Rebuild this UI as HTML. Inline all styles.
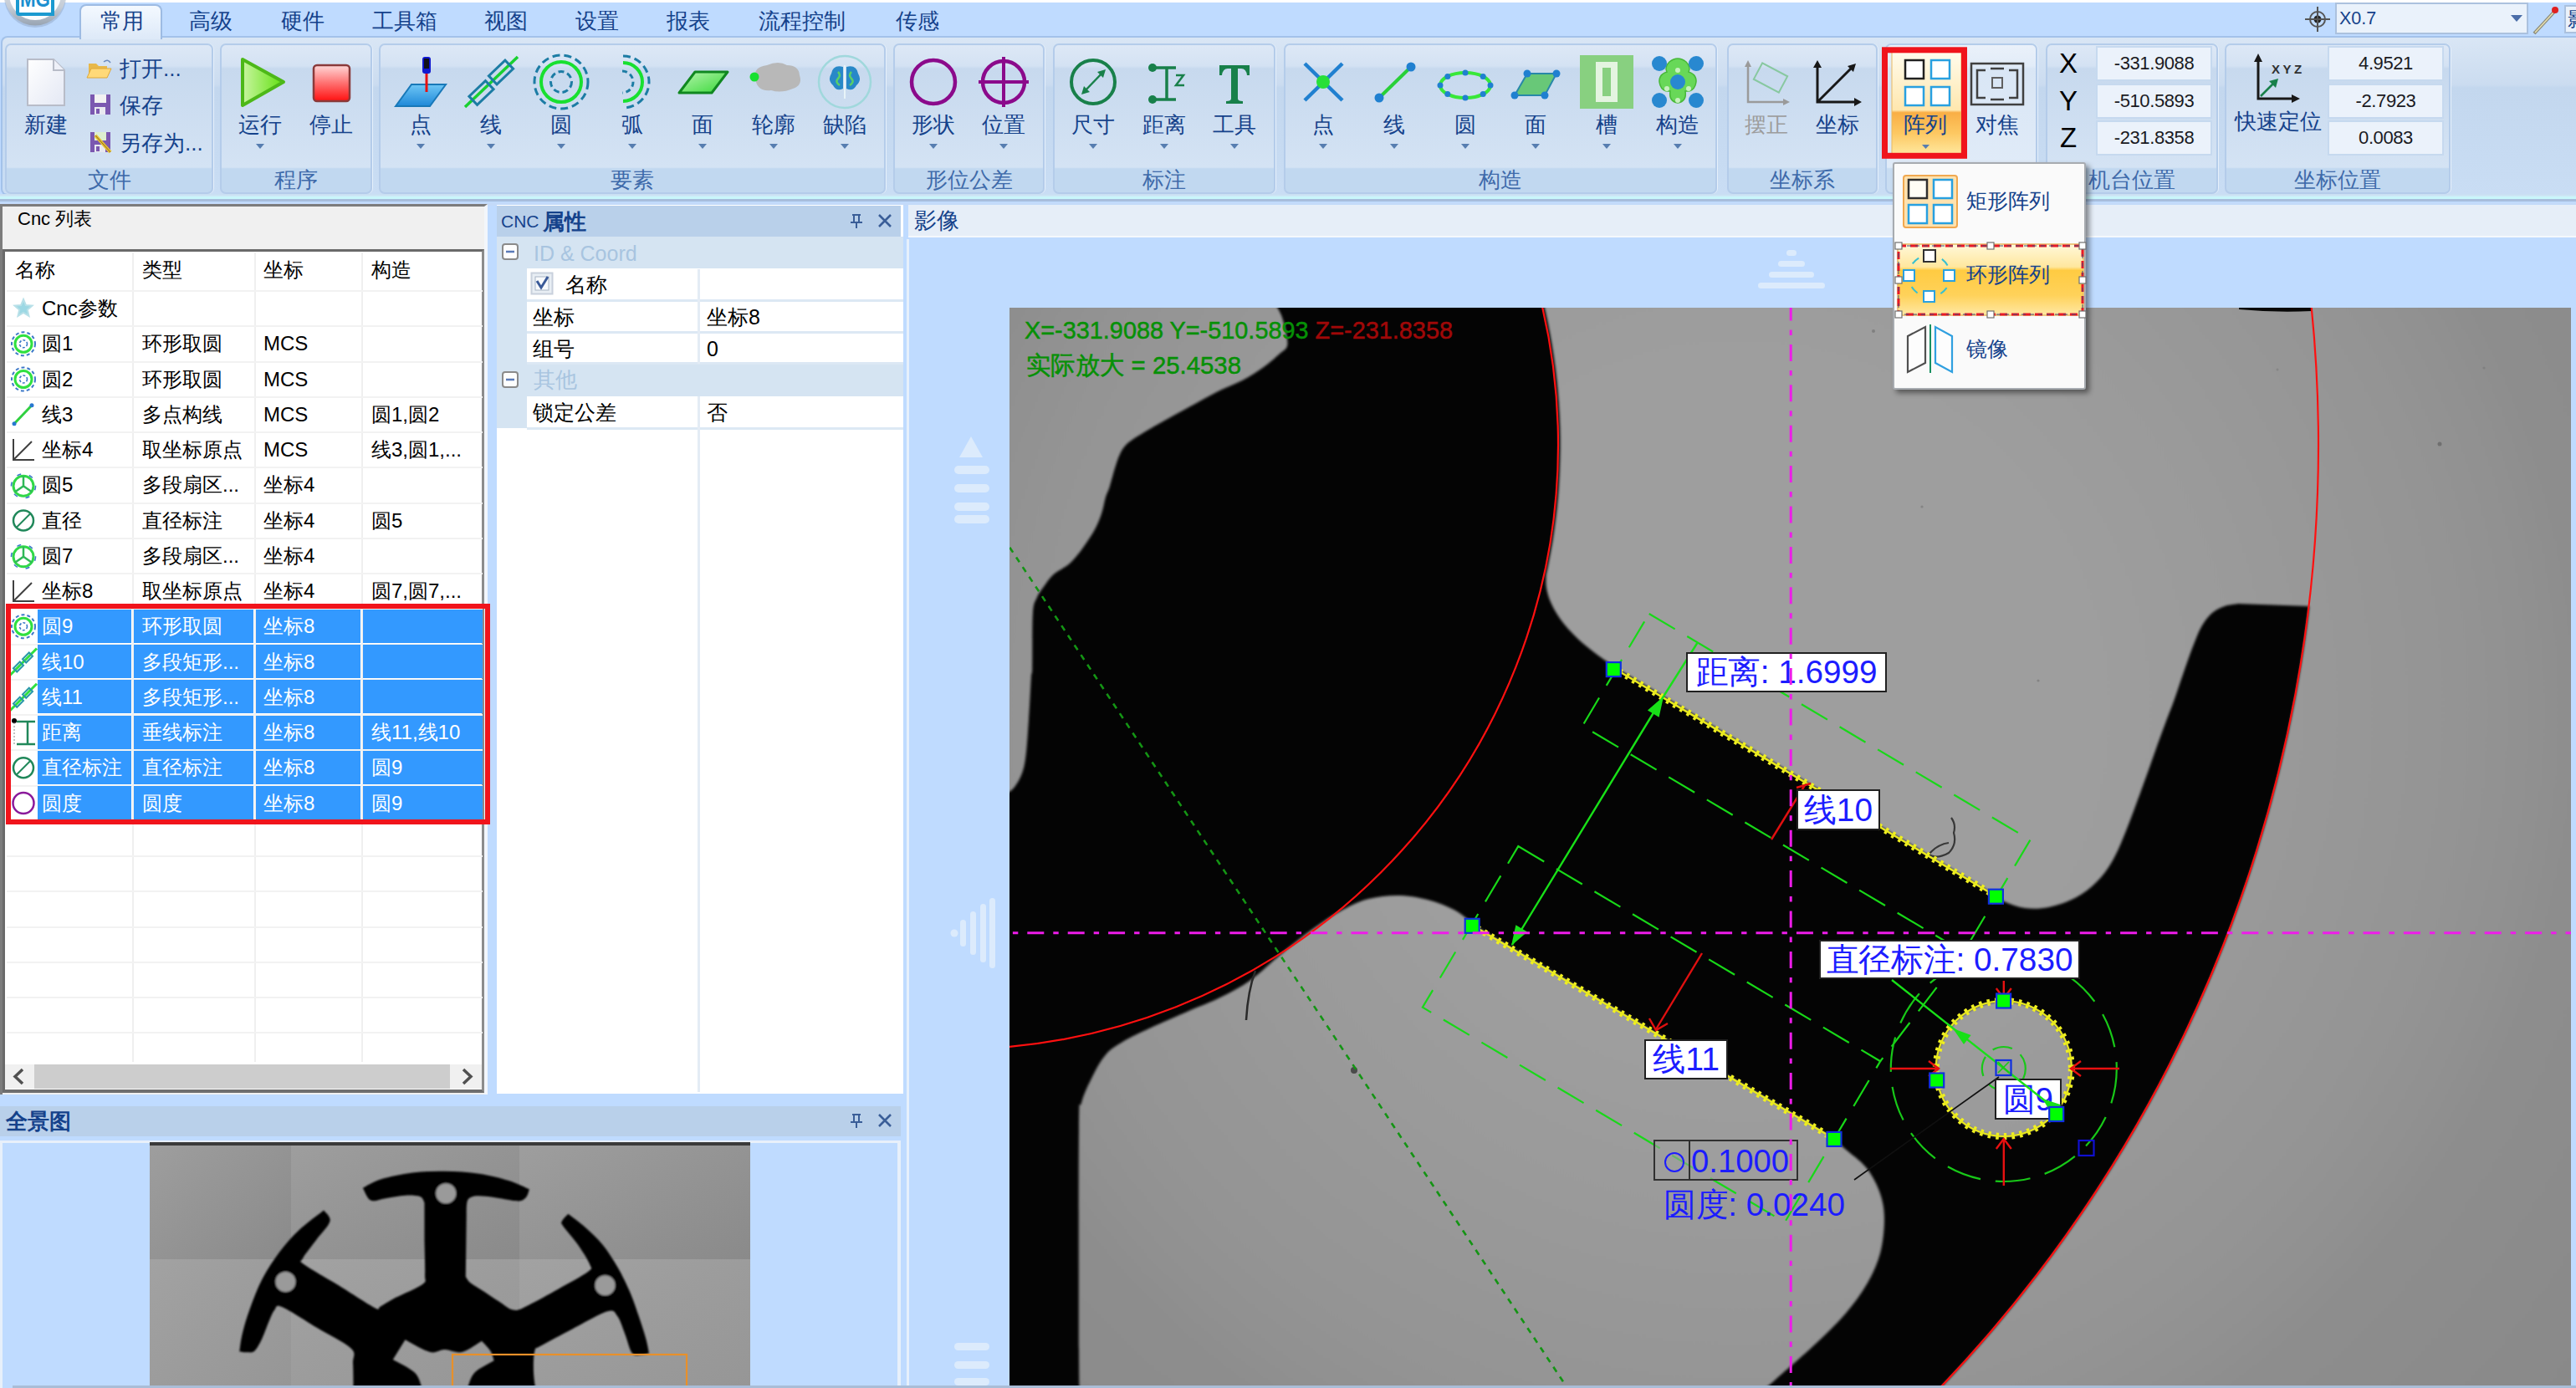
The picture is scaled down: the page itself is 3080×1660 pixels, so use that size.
<!DOCTYPE html>
<html><head><meta charset="utf-8"><title>CNC</title>
<style>
html,body{margin:0;padding:0;overflow:hidden;}
html{width:3080px;height:1660px;}
body{width:3080px;height:1660px;overflow:hidden;position:relative;background:#BFDBFF;font-family:"Liberation Sans",sans-serif;color:#15428B;}
.a{position:absolute;box-sizing:border-box;}
.t{position:absolute;white-space:nowrap;overflow:visible;}
svg{position:absolute;overflow:visible;}
i{display:inline-block;width:1em;text-align:center;font-style:normal;}

.tab{position:absolute;top:8px;height:34px;line-height:34px;font-size:26px;color:#15428B;white-space:nowrap;}
#tabact{left:95px;top:5px;width:99px;height:42px;border:2px solid #9DBBE3;border-bottom:none;border-radius:8px 8px 0 0;background:linear-gradient(#F4F9FF,#DDE9F8);}
#rbody{left:1px;top:43px;width:3079px;height:191px;border:2px solid #A3C2EA;border-right:none;border-radius:8px 0 0 8px;background:linear-gradient(#D9E6F5 0%,#CBDCF0 30%,#C3D7EE 32%,#C9DDF4 100%);}
#orb{left:6px;top:-46px;width:74px;height:76px;border-radius:50%;background:radial-gradient(circle at 50% 35%,#FFFFFF 0%,#E9EEF4 55%,#B9C3CF 90%,#9AA5B2 100%);box-shadow:0 2px 4px rgba(60,80,110,.55);}
#orblogo{left:19px;top:-20px;width:49px;height:38px;background:#FFFFFF;border:4px solid #1C9AD0;border-radius:3px;color:#1C8FD0;font-weight:bold;font-size:30px;line-height:16px;text-align:center;overflow:hidden;}
#combo{left:2792px;top:3px;width:231px;height:38px;background:#EAF2FB;border:2px solid #ABC1DE;font-size:21.5px;line-height:35px;padding-left:3px;color:#15428B;}

.grp{position:absolute;top:52px;height:179.5px;box-sizing:border-box;border:2px solid #B4CCEA;border-radius:7px;background:linear-gradient(#DDE8F6 0%,#D4E2F3 14%,#C7D9EE 16%,#D4E3F4 83%,#C1D8F0 84%,#C1D8F0 100%);box-shadow:1px 0 0 #E6F0FB;}
.gcap{position:absolute;top:201px;height:28px;line-height:28px;font-size:26px;color:#3E6AAA;text-align:center;white-space:nowrap;}
.bl{position:absolute;top:133px;height:32px;line-height:32px;font-size:26px;color:#15428B;text-align:center;white-space:nowrap;width:120px;}
.sl{position:absolute;height:32px;line-height:32px;font-size:26px;color:#15428B;white-space:nowrap;}
.vb{position:absolute;box-sizing:border-box;width:139px;height:42px;line-height:38px;border:2px solid #C6D9EF;background:#EBF2FB;color:#1A1A22;font-size:22px;letter-spacing:-0.4px;text-align:center;}
.xyz{position:absolute;left:2460px;width:26px;font-size:33px;line-height:42px;color:#000;text-align:center;}
#dd{left:2263px;top:194px;width:231px;height:272px;background:#FAFAFA;border:2px solid #A7ABB0;border-radius:3px;box-shadow:4px 4px 6px rgba(0,0,0,.45);}
.ddt{position:absolute;left:2351px;height:34px;line-height:34px;font-size:25px;color:#15428B;white-space:nowrap;}

#cnc{left:0;top:244px;width:583px;height:1065px;background:#F0F0F0;border-right:4px solid #F2F6FB;border-top:3px solid #7C7C7C;border-left:3px solid #7C7C7C;}
#cnclist{left:3px;top:298px;width:576px;height:1009px;background:#FFFFFF;border:3px solid #6A6A6A;border-right-color:#8C8C8C;border-bottom:4px solid #6E6E6E;}
.lt{position:absolute;height:42px;line-height:42px;font-size:24px;color:#000;white-space:nowrap;}
.lts{color:#FFFFFF;}
.hl{position:absolute;left:8px;width:569px;height:2px;background:#F2F2F2;}
.vl{position:absolute;top:302px;width:2px;height:968px;background:#EFEFEF;}
.selr{position:absolute;height:40px;background:#3399FF;}
#redbox{left:7px;top:722px;width:579px;height:263.5px;border:6px solid #F0141C;}
#prop{left:594px;top:245px;width:486px;height:1063px;background:#FFFFFF;}
.ptitle{position:absolute;background:#B9D0EA;color:#15428B;font-size:26px;line-height:38px;height:38px;white-space:nowrap;}
.pcat{position:absolute;left:594px;width:486px;background:#D5E4F2;color:#A8C4E0;font-size:26px;white-space:nowrap;}
.prow{position:absolute;font-size:25px;color:#000;white-space:nowrap;}
#pano{left:0;top:1364px;width:1077px;height:296px;background:#BFDBFF;border-left:3px solid #E8F0FA;border-right:4px solid #E8F0FA;border-top:3px solid #E8F0FA;}
#vhead{left:1086px;top:245px;width:1994px;height:39px;background:#E6EEF8;border-bottom:2px solid #F4F8FC;}

</style></head><body>
<div class="a" style="left:0;top:0;width:3080px;height:2.5px;background:#FFFFFF"></div><div class="a" id="rbody"></div>
<div class="a" id="tabact"></div>
<div class="tab" style="left:120px"><i>常</i><i>用</i></div>
<div class="tab" style="left:226px"><i>高</i><i>级</i></div>
<div class="tab" style="left:336px"><i>硬</i><i>件</i></div>
<div class="tab" style="left:445px"><i>工</i><i>具</i><i>箱</i></div>
<div class="tab" style="left:579px"><i>视</i><i>图</i></div>
<div class="tab" style="left:688px"><i>设</i><i>置</i></div>
<div class="tab" style="left:797px"><i>报</i><i>表</i></div>
<div class="tab" style="left:907px"><i>流</i><i>程</i><i>控</i><i>制</i></div>
<div class="tab" style="left:1071px"><i>传</i><i>感</i></div>
<svg style="left:0;top:0" width="90" height="40" viewBox="0 0 90 40" font-family="Liberation Sans, sans-serif"><defs><linearGradient id="gorb" x1="0" y1="0" x2="0" y2="1"><stop offset="0" stop-color="#E8ECF0"/><stop offset=".7" stop-color="#C4CCD6"/><stop offset="1" stop-color="#98A4B2"/></linearGradient></defs>
<circle cx="42" cy="-4" r="37" fill="#7F93B0" opacity=".35"/><circle cx="42" cy="-6" r="36.5" fill="url(#gorb)"/><circle cx="42" cy="-7" r="31" fill="#FBFCFD"/>
<rect x="21" y="-26" width="42" height="43" rx="2" fill="#FFFFFF" stroke="#1C9AD0" stroke-width="4"/><path d="M57 19l8-8v8z" fill="#1C9AD0"/>
<text x="42" y="7.5" font-size="27" font-weight="bold" fill="#1C8FD0" text-anchor="middle" textLength="36" lengthAdjust="spacingAndGlyphs">MG</text></svg>
<svg style="left:2756px;top:8px" width="30" height="30" viewBox="0 0 30 30"><circle cx="15" cy="15" r="9" fill="none" stroke="#555" stroke-width="2"/><circle cx="15" cy="15" r="4.5" fill="#222"/><path d="M15 0V30M0 15H30" stroke="#555" stroke-width="2"/></svg>
<div class="a" id="combo">X0.7</div>
<svg style="left:3002px;top:18px" width="14" height="8" viewBox="0 0 14 8"><path d="M0 0H14L7 8Z" fill="#4A6DA8"/></svg>
<svg style="left:3028px;top:6px" width="32" height="36" viewBox="0 0 32 36"><path d="M2 34L26 8" stroke="#8A8A7A" stroke-width="4"/><path d="M3 33L25 9" stroke="#E8E0B0" stroke-width="1.5"/><circle cx="27" cy="6" r="4" fill="#E02020"/></svg>
<div class="a" style="left:3066px;top:6px;width:14px;height:34px;background:#EAF2FB;border:2px solid #ABC1DE;border-right:none"></div>
<div class="t" style="left:3070px;top:8px;width:10px;overflow:hidden;font-size:24px;line-height:30px;color:#15428B"><i>影</i></div>
<div class="a" style="left:0;top:232px;width:3080px;height:3px;background:linear-gradient(#C9DDF2,#CFEAF6)"></div><div class="a" style="left:0;top:234.5px;width:3080px;height:3.7px;background:#C9F6FB"></div><div class="a" style="left:0;top:238.2px;width:3080px;height:3.3px;background:#A7BDDC"></div><div class="a" style="left:0;top:241.5px;width:3080px;height:4px;background:#C3DAF9"></div>
<div class="grp" style="left:6px;width:249px"></div><div class="gcap" style="left:6px;width:249px"><i>文</i><i>件</i></div>
<div class="grp" style="left:263px;width:182px"></div><div class="gcap" style="left:263px;width:182px"><i>程</i><i>序</i></div>
<div class="grp" style="left:453px;width:606px"></div><div class="gcap" style="left:453px;width:606px"><i>要</i><i>素</i></div>
<div class="grp" style="left:1068px;width:181px"></div><div class="gcap" style="left:1068px;width:181px"><i>形</i><i>位</i><i>公</i><i>差</i></div>
<div class="grp" style="left:1259px;width:266px"></div><div class="gcap" style="left:1259px;width:266px"><i>标</i><i>注</i></div>
<div class="grp" style="left:1535px;width:518px"></div><div class="gcap" style="left:1535px;width:518px"><i>构</i><i>造</i></div>
<div class="grp" style="left:2065px;width:180px"></div><div class="gcap" style="left:2065px;width:180px"><i>坐</i><i>标</i><i>系</i></div>
<div class="grp" style="left:2254px;width:182px;background:linear-gradient(#EAF1FA 0%,#E2ECF8 14%,#D9E6F5 16%,#E0EBF8 83%,#C9DDF2 84%,#C9DDF2 100%)"></div><div class="grp" style="left:2446px;width:206px"></div><div class="gcap" style="left:2446px;width:206px"><i>机</i><i>台</i><i>位</i><i>置</i></div>
<div class="grp" style="left:2660px;width:270px"></div><div class="gcap" style="left:2660px;width:270px"><i>坐</i><i>标</i><i>位</i><i>置</i></div>
<svg style="left:0;top:0" width="3080" height="240" viewBox="0 0 3080 240"><defs>
<linearGradient id="gpage" x1="0" y1="0" x2="1" y2="1"><stop offset="0" stop-color="#FFFFFF"/><stop offset="1" stop-color="#E4E8F4"/></linearGradient>
<linearGradient id="gplay" x1="0" y1="0" x2="1" y2="0"><stop offset="0" stop-color="#C8F5A0"/><stop offset="1" stop-color="#62E010"/></linearGradient>
<linearGradient id="gstop" x1="0" y1="0" x2="0" y2="1"><stop offset="0" stop-color="#FFD8D8"/><stop offset=".5" stop-color="#FF7070"/><stop offset="1" stop-color="#FF1010"/></linearGradient>
<linearGradient id="gblue" x1="0" y1="0" x2="0" y2="1"><stop offset="0" stop-color="#6EC6F5"/><stop offset="1" stop-color="#1E88D8"/></linearGradient>
<linearGradient id="ggreen" x1="0" y1="0" x2="1" y2="1"><stop offset="0" stop-color="#B8F5B0"/><stop offset="1" stop-color="#38D838"/></linearGradient>
<linearGradient id="gsel" x1="0" y1="0" x2="0" y2="1"><stop offset="0" stop-color="#FFFCEE"/><stop offset=".56" stop-color="#FFE7AE"/><stop offset=".585" stop-color="#F9AE45"/><stop offset=".78" stop-color="#FDC862"/><stop offset="1" stop-color="#FFEBA4"/></linearGradient>
<linearGradient id="gsel2" x1="0" y1="0" x2="0" y2="1"><stop offset="0" stop-color="#FFF8DA"/><stop offset=".32" stop-color="#FFE79E"/><stop offset=".37" stop-color="#FFCB42"/><stop offset=".72" stop-color="#FFD25A"/><stop offset="1" stop-color="#FFE8A4"/></linearGradient>
</defs><path d="M33 71h31l13 13v42h-44z" fill="url(#gpage)" stroke="#B8BCC8" stroke-width="2"/><path d="M64 71v13h13" fill="#EEF0F8" stroke="#B8BCC8" stroke-width="2"/><path d="M106 76h9l3 3h10v14h-22z" fill="#E8B84A"/><path d="M104 93l5-11h24l-5 11z" fill="#FFD978" stroke="#E0A838" stroke-width="1"/><path d="M124 74q5-4 8 1" fill="none" stroke="#6A8ABF" stroke-width="1.5"/><path d="M108 113h24v24h-24z" fill="#7B58B0"/><rect x="113" y="113" width="14" height="10" fill="#F2F2F2"/><rect x="113" y="128" width="13" height="9" fill="#E8E8F0"/><rect x="115" y="130" width="4" height="6" fill="#7B58B0"/><path d="M108 158h24v24h-24z" fill="#7B58B0"/><rect x="113" y="158" width="14" height="10" fill="#DDEFD0"/><rect x="113" y="173" width="13" height="9" fill="#E8E8F0"/><rect x="115" y="175" width="4" height="6" fill="#7B58B0"/><path d="M114 162l18 20" stroke="#E8C030" stroke-width="4"/><path d="M114 162l18 20" stroke="#8A6A20" stroke-width="1"/><path d="M290 71L339 98L290 126Z" fill="url(#gplay)" stroke="#4DB818" stroke-width="4" stroke-linejoin="round"/><path d="M306 172h10l-5 6z" fill="#567DB0"/><rect x="375" y="78" width="43" height="43" rx="4" fill="url(#gstop)" stroke="#8A3A3A" stroke-width="2.5"/><path d="M473 127L492 101H533L514 127Z" fill="url(#gblue)" stroke="#1878B8" stroke-width="2"/><path d="M510 88V110" stroke="#E81010" stroke-width="3"/><rect x="505" y="68" width="10" height="20" rx="3" fill="#1018D0"/><rect x="507" y="70" width="6" height="12" fill="#101018"/><path d="M556 128L619 68" stroke="#18D030" stroke-width="3.5"/><rect x="562" y="104" width="27" height="14" fill="none" stroke="#1C7CA4" stroke-width="3" transform="rotate(-43.6 575.5 111)"/><rect x="585.5" y="79.5" width="27" height="14" fill="none" stroke="#1C7CA4" stroke-width="3" transform="rotate(-43.6 599 86.5)"/><circle cx="671" cy="98" r="32" fill="none" stroke="#1C7CA4" stroke-width="3" stroke-dasharray="9 5"/><circle cx="671" cy="98" r="24" fill="none" stroke="#18E030" stroke-width="4"/><circle cx="671" cy="98" r="12.5" fill="none" stroke="#1C7CA4" stroke-width="3" stroke-dasharray="7 4"/><path d="M745 67A31 31 0 0 1 745 129" fill="none" stroke="#1C7CA4" stroke-width="3" stroke-dasharray="9 5"/><path d="M745 75A23 23 0 0 1 745 121" fill="none" stroke="#18E030" stroke-width="4"/><path d="M744 85A13 13 0 0 1 744 111" fill="none" stroke="#1C7CA4" stroke-width="3" stroke-dasharray="6 4"/><path d="M812 111L831 86H870L851 111Z" fill="url(#ggreen)" stroke="#108820" stroke-width="3" stroke-linejoin="round"/><path d="M903 92q-2-12 14-14q14-6 24 0q14 0 15 12q4 12-8 16q-14 6-26 2q-18 2-19-16z" fill="#B8B8B8"/><circle cx="902" cy="92" r="5.5" fill="#18E030"/><circle cx="1010" cy="98" r="31" fill="none" stroke="#A0D8DC" stroke-width="2.5"/><path d="M1008 80q-12-3-14 8q-5 8 2 14q4 8 12 4zM1012 80q12-3 14 8q5 8-2 14q-4 8-12 4z" fill="#2888C8"/><path d="M1010 78v40" stroke="#E8F4F8" stroke-width="2"/><path d="M1002 86q4 4 0 8q-4 4 2 8M1018 86q-4 4 0 8q4 4-2 8" stroke="#58D068" stroke-width="2.5" fill="none"/><path d="M498 172h10l-5 6z" fill="#567DB0"/><path d="M582 172h10l-5 6z" fill="#567DB0"/><path d="M666 172h10l-5 6z" fill="#567DB0"/><path d="M751 172h10l-5 6z" fill="#567DB0"/><path d="M835 172h10l-5 6z" fill="#567DB0"/><path d="M920 172h10l-5 6z" fill="#567DB0"/><path d="M1005 172h10l-5 6z" fill="#567DB0"/><circle cx="1116" cy="98" r="26" fill="none" stroke="#8B0A8B" stroke-width="4.5"/><circle cx="1200" cy="98" r="25" fill="none" stroke="#8B0A8B" stroke-width="4.5"/><path d="M1200 68V128M1170 98H1230" stroke="#8B0A8B" stroke-width="4"/><path d="M1111 172h10l-5 6z" fill="#567DB0"/><path d="M1195 172h10l-5 6z" fill="#567DB0"/><circle cx="1307" cy="98" r="26" fill="none" stroke="#18804A" stroke-width="4"/><path d="M1295 111L1320 85" stroke="#18804A" stroke-width="2.5"/><path d="M1322 83l-3 10l-7-7zM1293 113l3-10l7 7z" fill="#18804A"/><path d="M1378 81H1406M1378 119H1406M1395 81V119" stroke="#18804A" stroke-width="3.5" fill="none"/><circle cx="1378" cy="81" r="5" fill="#18804A"/><circle cx="1378" cy="119" r="5" fill="#18804A"/><path d="M1406 90h9l-9 12h10" stroke="#18804A" stroke-width="2.5" fill="none"/><path d="M1458 78H1494V90H1491Q1490 82 1484 82H1480V118Q1480 121 1486 121V124H1466V121Q1472 121 1472 118V82H1468Q1462 82 1461 90H1458Z" fill="#18804A"/><path d="M1302 172h10l-5 6z" fill="#567DB0"/><path d="M1387 172h10l-5 6z" fill="#567DB0"/><path d="M1471 172h10l-5 6z" fill="#567DB0"/><path d="M1560 76L1605 120M1605 76L1560 120" stroke="#2080D0" stroke-width="4.5"/><circle cx="1582" cy="98" r="8" fill="#28E038"/><path d="M1649 117L1687 80" stroke="#28D038" stroke-width="4"/><circle cx="1649" cy="117" r="5.5" fill="#2080D0"/><circle cx="1687" cy="80" r="5.5" fill="#2080D0"/><ellipse cx="1752" cy="102" rx="30" ry="15" fill="none" stroke="#38E838" stroke-width="4"/><circle cx="1782.0" cy="102.0" r="3.5" fill="#2080D0"/><circle cx="1773.2" cy="112.6" r="3.5" fill="#2080D0"/><circle cx="1752.0" cy="117.0" r="3.5" fill="#2080D0"/><circle cx="1730.8" cy="112.6" r="3.5" fill="#2080D0"/><circle cx="1722.0" cy="102.0" r="3.5" fill="#2080D0"/><circle cx="1730.8" cy="91.4" r="3.5" fill="#2080D0"/><circle cx="1752.0" cy="87.0" r="3.5" fill="#2080D0"/><circle cx="1773.2" cy="91.4" r="3.5" fill="#2080D0"/><path d="M1811 114L1826 88H1861L1847 114Z" fill="#68C878" stroke="#2888A8" stroke-width="2"/><circle cx="1811" cy="114" r="4.5" fill="#2080D0"/><circle cx="1826" cy="88" r="4.5" fill="#2080D0"/><circle cx="1861" cy="88" r="4.5" fill="#2080D0"/><circle cx="1847" cy="114" r="4.5" fill="#2080D0"/><rect x="1889" y="66" width="64" height="64" fill="#88D080"/><rect x="1908" y="74" width="26" height="48" fill="#E4F4E0"/><rect x="1916" y="81" width="10" height="34" fill="#88D080"/><path d="M1996 74q10-8 20 0q6 6 3 12q12 4 8 16q-3 8-12 7q2 12-9 14q-11-2-9-14q-9 1-12-7q-4-12 8-16q-3-6 3-12z" fill="#68D858" stroke="#48B838" stroke-width="1.5"/><circle cx="1984" cy="76" r="9" fill="#2888D0"/><circle cx="1984" cy="120" r="9" fill="#2888D0"/><circle cx="2006" cy="98" r="9" fill="#2888D0"/><circle cx="2028" cy="76" r="9" fill="#2888D0"/><circle cx="2028" cy="120" r="9" fill="#2888D0"/><circle cx="2006" cy="84" r="3" fill="#C8F0C0"/><circle cx="1993" cy="106" r="3" fill="#C8F0C0"/><circle cx="2019" cy="106" r="3" fill="#C8F0C0"/><circle cx="2006" cy="120" r="3" fill="#C8F0C0"/><path d="M1577 172h10l-5 6z" fill="#567DB0"/><path d="M1662 172h10l-5 6z" fill="#567DB0"/><path d="M1747 172h10l-5 6z" fill="#567DB0"/><path d="M1831 172h10l-5 6z" fill="#567DB0"/><path d="M1916 172h10l-5 6z" fill="#567DB0"/><path d="M2001 172h10l-5 6z" fill="#567DB0"/><path d="M2090 78V122H2135" stroke="#9A9A9A" stroke-width="2.5" fill="none"/><path d="M2090 72l-4 8h8zM2140 122l-8-4v8z" fill="#9A9A9A"/><rect x="2100" y="82" width="34" height="22" fill="none" stroke="#88C8A0" stroke-width="2" transform="rotate(28 2117 93)"/><path d="M2173 78V122H2220M2173 122L2215 80" stroke="#181818" stroke-width="3" fill="none"/><path d="M2173 72l-5 9h10zM2226 122l-9-5v10zM2219 76l-10 3l7 7z" fill="#181818"/><rect x="2262" y="61" width="83" height="126" fill="url(#gsel)" stroke="#E8B860" stroke-width="1"/><rect x="2278" y="72" width="22" height="22" fill="#FFFFFF" stroke="#202020" stroke-width="2.5"/><rect x="2309" y="72" width="22" height="22" fill="#FFFFFF" stroke="#28A0E0" stroke-width="2.5"/><rect x="2278" y="104" width="22" height="22" fill="#FFFFFF" stroke="#28A0E0" stroke-width="2.5"/><rect x="2309" y="104" width="22" height="22" fill="#FFFFFF" stroke="#28A0E0" stroke-width="2.5"/><path d="M2298 173h9l-4.5 5z" fill="#567DB0"/><rect x="2253.5" y="59.8" width="95" height="126.5" fill="none" stroke="#F0141C" stroke-width="7"/><rect x="2357" y="76" width="62" height="49" fill="none" stroke="#404040" stroke-width="2.5"/><path d="M2374 84H2364V117H2374M2402 84H2412V117H2402M2380 82H2396M2380 119H2396" stroke="#404040" stroke-width="2.5" fill="none"/><rect x="2382" y="93" width="12" height="12" fill="none" stroke="#606060" stroke-width="2"/><path d="M2700 72V118H2742" stroke="#181818" stroke-width="3" fill="none"/><path d="M2700 64l-5 10h10zM2750 118l-10-5v10z" fill="#181818"/><path d="M2703 115L2720 98" stroke="#18804A" stroke-width="2.5"/><path d="M2724 94l-11 3l8 8z" fill="#18804A"/></svg>
<div class="bl" style="left:-5px"><i>新</i><i>建</i></div><div class="bl" style="left:251px"><i>运</i><i>行</i></div><div class="bl" style="left:336px"><i>停</i><i>止</i></div><div class="bl" style="left:443px"><i>点</i></div><div class="bl" style="left:527px"><i>线</i></div><div class="bl" style="left:611px"><i>圆</i></div><div class="bl" style="left:696px"><i>弧</i></div><div class="bl" style="left:780px"><i>面</i></div><div class="bl" style="left:865px"><i>轮</i><i>廓</i></div><div class="bl" style="left:950px"><i>缺</i><i>陷</i></div><div class="bl" style="left:1056px"><i>形</i><i>状</i></div><div class="bl" style="left:1140px"><i>位</i><i>置</i></div><div class="bl" style="left:1247px"><i>尺</i><i>寸</i></div><div class="bl" style="left:1332px"><i>距</i><i>离</i></div><div class="bl" style="left:1416px"><i>工</i><i>具</i></div><div class="bl" style="left:1522px"><i>点</i></div><div class="bl" style="left:1607px"><i>线</i></div><div class="bl" style="left:1692px"><i>圆</i></div><div class="bl" style="left:1776px"><i>面</i></div><div class="bl" style="left:1861px"><i>槽</i></div><div class="bl" style="left:1946px"><i>构</i><i>造</i></div><div class="bl" style="left:2137px"><i>坐</i><i>标</i></div><div class="bl" style="left:2242px"><i>阵</i><i>列</i></div><div class="bl" style="left:2328px"><i>对</i><i>焦</i></div><div class="bl" style="left:2052px;color:#9C9C9C"><i>摆</i><i>正</i></div>
<div class="sl" style="left:143px;top:66px"><i>打</i><i>开</i>...</div><div class="sl" style="left:143px;top:110px"><i>保</i><i>存</i></div><div class="sl" style="left:143px;top:155px"><i>另</i><i>存</i><i>为</i>...</div>
<div class="sl" style="left:2672px;top:129px"><i>快</i><i>速</i><i>定</i><i>位</i></div><div class="t" style="left:2716px;top:74px;font-size:15px;line-height:18px;color:#303030;letter-spacing:3.5px;font-weight:bold">XYZ</div>
<div class="xyz" style="top:55px">X</div><div class="vb" style="left:2506px;top:55px">-331.9088</div><div class="vb" style="left:2783px;top:55px">4.9521</div>
<div class="xyz" style="top:99.5px">Y</div><div class="vb" style="left:2506px;top:99.5px">-510.5893</div><div class="vb" style="left:2783px;top:99.5px">-2.7923</div>
<div class="xyz" style="top:144px">Z</div><div class="vb" style="left:2506px;top:144px">-231.8358</div><div class="vb" style="left:2783px;top:144px">0.0083</div>
<div class="a" id="cnc"></div><div class="t" style="left:21px;top:247px;font-size:22px;line-height:30px;color:#000">Cnc <i>列</i><i>表</i></div>
<div class="a" id="cnclist"></div>
<div class="vl" style="left:158px"></div><div class="vl" style="left:304px"></div><div class="vl" style="left:432px"></div><div class="hl" style="top:347.0px"></div><div class="hl" style="top:389.2px"></div><div class="hl" style="top:431.5px"></div><div class="hl" style="top:473.8px"></div><div class="hl" style="top:516.0px"></div><div class="hl" style="top:558.2px"></div><div class="hl" style="top:600.5px"></div><div class="hl" style="top:642.8px"></div><div class="hl" style="top:685.0px"></div><div class="hl" style="top:727.2px"></div><div class="hl" style="top:769.5px"></div><div class="hl" style="top:811.8px"></div><div class="hl" style="top:854.0px"></div><div class="hl" style="top:896.2px"></div><div class="hl" style="top:938.5px"></div><div class="hl" style="top:980.8px"></div><div class="hl" style="top:1023.0px"></div><div class="hl" style="top:1065.2px"></div><div class="hl" style="top:1107.5px"></div><div class="hl" style="top:1149.8px"></div><div class="hl" style="top:1192.0px"></div><div class="hl" style="top:1234.2px"></div>
<div class="lt" style="left:18px;top:302px"><i>名</i><i>称</i></div><div class="lt" style="left:170px;top:302px"><i>类</i><i>型</i></div><div class="lt" style="left:315px;top:302px"><i>坐</i><i>标</i></div><div class="lt" style="left:444px;top:302px"><i>构</i><i>造</i></div>
<div class="selr" style="left:45px;top:728.8px;width:112px"></div><div class="selr" style="left:160px;top:728.8px;width:143px"></div><div class="selr" style="left:306px;top:728.8px;width:125px"></div><div class="selr" style="left:434px;top:728.8px;width:143px"></div><div class="selr" style="left:45px;top:771.0px;width:112px"></div><div class="selr" style="left:160px;top:771.0px;width:143px"></div><div class="selr" style="left:306px;top:771.0px;width:125px"></div><div class="selr" style="left:434px;top:771.0px;width:143px"></div><div class="selr" style="left:45px;top:813.2px;width:112px"></div><div class="selr" style="left:160px;top:813.2px;width:143px"></div><div class="selr" style="left:306px;top:813.2px;width:125px"></div><div class="selr" style="left:434px;top:813.2px;width:143px"></div><div class="selr" style="left:45px;top:855.5px;width:112px"></div><div class="selr" style="left:160px;top:855.5px;width:143px"></div><div class="selr" style="left:306px;top:855.5px;width:125px"></div><div class="selr" style="left:434px;top:855.5px;width:143px"></div><div class="selr" style="left:45px;top:897.8px;width:112px"></div><div class="selr" style="left:160px;top:897.8px;width:143px"></div><div class="selr" style="left:306px;top:897.8px;width:125px"></div><div class="selr" style="left:434px;top:897.8px;width:143px"></div><div class="selr" style="left:45px;top:940.0px;width:112px"></div><div class="selr" style="left:160px;top:940.0px;width:143px"></div><div class="selr" style="left:306px;top:940.0px;width:125px"></div><div class="selr" style="left:434px;top:940.0px;width:143px"></div>
<svg style="left:0;top:0" width="600" height="1320" viewBox="0 0 600 1320"><polygon points="28.0,358.0 30.9,365.0 38.5,365.6 32.8,370.5 34.5,377.9 28.0,374.0 21.5,377.9 23.2,370.5 17.5,365.6 25.1,365.0" fill="#9CD8E4" stroke="#B8E0E8" stroke-width="2"/><circle cx="28" cy="411.25" r="14" fill="none" stroke="#3C78C8" stroke-width="2" stroke-dasharray="4 3"/><circle cx="28" cy="411.25" r="10" fill="none" stroke="#30E040" stroke-width="3"/><circle cx="28" cy="411.25" r="4.5" fill="none" stroke="#3C78C8" stroke-width="1.6" stroke-dasharray="3 2"/><circle cx="28" cy="453.5" r="14" fill="none" stroke="#3C78C8" stroke-width="2" stroke-dasharray="4 3"/><circle cx="28" cy="453.5" r="10" fill="none" stroke="#30E040" stroke-width="3"/><circle cx="28" cy="453.5" r="4.5" fill="none" stroke="#3C78C8" stroke-width="1.6" stroke-dasharray="3 2"/><path d="M17 506.75L38 484.75" stroke="#30D040" stroke-width="3"/><circle cx="17" cy="506.75" r="2.5" fill="#2878D0"/><circle cx="38" cy="484.75" r="2.5" fill="#2878D0"/><path d="M16 525V550H41M16 550L38 528" stroke="#404040" stroke-width="2" fill="none"/><circle cx="28" cy="581.25" r="12" fill="none" stroke="#30D848" stroke-width="3"/><path d="M28 569.25v12l-10 7m10-7l10 7" stroke="#30B858" stroke-width="2.5" fill="none"/><circle cx="28" cy="581.25" r="14.5" fill="none" stroke="#3C78C8" stroke-width="1.6" stroke-dasharray="5 10"/><circle cx="28" cy="622.5" r="12" fill="none" stroke="#20885A" stroke-width="2.5"/><path d="M20 630.5L36 614.5" stroke="#20885A" stroke-width="2"/><circle cx="28" cy="665.75" r="12" fill="none" stroke="#30D848" stroke-width="3"/><path d="M28 653.75v12l-10 7m10-7l10 7" stroke="#30B858" stroke-width="2.5" fill="none"/><circle cx="28" cy="665.75" r="14.5" fill="none" stroke="#3C78C8" stroke-width="1.6" stroke-dasharray="5 10"/><path d="M16 694V719H41M16 719L38 697" stroke="#404040" stroke-width="2" fill="none"/><circle cx="28" cy="749.25" r="14" fill="none" stroke="#3C78C8" stroke-width="2" stroke-dasharray="4 3"/><circle cx="28" cy="749.25" r="10" fill="none" stroke="#30E040" stroke-width="3"/><circle cx="28" cy="749.25" r="4.5" fill="none" stroke="#3C78C8" stroke-width="1.6" stroke-dasharray="3 2"/><path d="M12 807.5L44 775.5" stroke="#30E040" stroke-width="3"/><rect x="16.5" y="794.5" width="11" height="6" fill="none" stroke="#2898A8" stroke-width="2" transform="rotate(-45 22 797.5)"/><rect x="27.5" y="783.5" width="11" height="6" fill="none" stroke="#2898A8" stroke-width="2" transform="rotate(-45 33 786.5)"/><path d="M12 849.75L44 817.75" stroke="#30E040" stroke-width="3"/><rect x="16.5" y="836.75" width="11" height="6" fill="none" stroke="#2898A8" stroke-width="2" transform="rotate(-45 22 839.75)"/><rect x="27.5" y="825.75" width="11" height="6" fill="none" stroke="#2898A8" stroke-width="2" transform="rotate(-45 33 828.75)"/><path d="M20 863H42M20 890H42M33 863V890" stroke="#20885A" stroke-width="2.5" fill="none"/><circle cx="17" cy="862" r="3" fill="#000"/><path d="M17 864V890" stroke="#888" stroke-width="1" stroke-dasharray="2 2"/><circle cx="28" cy="918.25" r="12" fill="none" stroke="#20885A" stroke-width="2.5"/><path d="M20 926.25L36 910.25" stroke="#20885A" stroke-width="2"/><circle cx="28" cy="960.5" r="12.5" fill="none" stroke="#8B1A9B" stroke-width="2.5"/><rect x="6" y="1273" width="570" height="29" fill="#F0F0F0"/><rect x="41" y="1273" width="497" height="29" fill="#CDCDCD"/><path d="M27 1279l-9 8.5l9 8.5M554 1279l9 8.5l-9 8.5" stroke="#505050" stroke-width="3.5" fill="none"/></svg>
<div class="lt" style="left:50px;top:348.0px">Cnc<i>参</i><i>数</i></div>
<div class="lt" style="left:50px;top:390.2px"><i>圆</i>1</div><div class="lt" style="left:170px;top:390.2px"><i>环</i><i>形</i><i>取</i><i>圆</i></div><div class="lt" style="left:315px;top:390.2px">MCS</div>
<div class="lt" style="left:50px;top:432.5px"><i>圆</i>2</div><div class="lt" style="left:170px;top:432.5px"><i>环</i><i>形</i><i>取</i><i>圆</i></div><div class="lt" style="left:315px;top:432.5px">MCS</div>
<div class="lt" style="left:50px;top:474.8px"><i>线</i>3</div><div class="lt" style="left:170px;top:474.8px"><i>多</i><i>点</i><i>构</i><i>线</i></div><div class="lt" style="left:315px;top:474.8px">MCS</div><div class="lt" style="left:444px;top:474.8px"><i>圆</i>1,<i>圆</i>2</div>
<div class="lt" style="left:50px;top:517.0px"><i>坐</i><i>标</i>4</div><div class="lt" style="left:170px;top:517.0px"><i>取</i><i>坐</i><i>标</i><i>原</i><i>点</i></div><div class="lt" style="left:315px;top:517.0px">MCS</div><div class="lt" style="left:444px;top:517.0px"><i>线</i>3,<i>圆</i>1,...</div>
<div class="lt" style="left:50px;top:559.2px"><i>圆</i>5</div><div class="lt" style="left:170px;top:559.2px"><i>多</i><i>段</i><i>扇</i><i>区</i>...</div><div class="lt" style="left:315px;top:559.2px"><i>坐</i><i>标</i>4</div>
<div class="lt" style="left:50px;top:601.5px"><i>直</i><i>径</i></div><div class="lt" style="left:170px;top:601.5px"><i>直</i><i>径</i><i>标</i><i>注</i></div><div class="lt" style="left:315px;top:601.5px"><i>坐</i><i>标</i>4</div><div class="lt" style="left:444px;top:601.5px"><i>圆</i>5</div>
<div class="lt" style="left:50px;top:643.8px"><i>圆</i>7</div><div class="lt" style="left:170px;top:643.8px"><i>多</i><i>段</i><i>扇</i><i>区</i>...</div><div class="lt" style="left:315px;top:643.8px"><i>坐</i><i>标</i>4</div>
<div class="lt" style="left:50px;top:686.0px"><i>坐</i><i>标</i>8</div><div class="lt" style="left:170px;top:686.0px"><i>取</i><i>坐</i><i>标</i><i>原</i><i>点</i></div><div class="lt" style="left:315px;top:686.0px"><i>坐</i><i>标</i>4</div><div class="lt" style="left:444px;top:686.0px"><i>圆</i>7,<i>圆</i>7,...</div>
<div class="lt lts" style="left:50px;top:728.2px"><i>圆</i>9</div><div class="lt lts" style="left:170px;top:728.2px"><i>环</i><i>形</i><i>取</i><i>圆</i></div><div class="lt lts" style="left:315px;top:728.2px"><i>坐</i><i>标</i>8</div>
<div class="lt lts" style="left:50px;top:770.5px"><i>线</i>10</div><div class="lt lts" style="left:170px;top:770.5px"><i>多</i><i>段</i><i>矩</i><i>形</i>...</div><div class="lt lts" style="left:315px;top:770.5px"><i>坐</i><i>标</i>8</div>
<div class="lt lts" style="left:50px;top:812.8px"><i>线</i>11</div><div class="lt lts" style="left:170px;top:812.8px"><i>多</i><i>段</i><i>矩</i><i>形</i>...</div><div class="lt lts" style="left:315px;top:812.8px"><i>坐</i><i>标</i>8</div>
<div class="lt lts" style="left:50px;top:855.0px"><i>距</i><i>离</i></div><div class="lt lts" style="left:170px;top:855.0px"><i>垂</i><i>线</i><i>标</i><i>注</i></div><div class="lt lts" style="left:315px;top:855.0px"><i>坐</i><i>标</i>8</div><div class="lt lts" style="left:444px;top:855.0px"><i>线</i>11,<i>线</i>10</div>
<div class="lt lts" style="left:50px;top:897.2px"><i>直</i><i>径</i><i>标</i><i>注</i></div><div class="lt lts" style="left:170px;top:897.2px"><i>直</i><i>径</i><i>标</i><i>注</i></div><div class="lt lts" style="left:315px;top:897.2px"><i>坐</i><i>标</i>8</div><div class="lt lts" style="left:444px;top:897.2px"><i>圆</i>9</div>
<div class="lt lts" style="left:50px;top:939.5px"><i>圆</i><i>度</i></div><div class="lt lts" style="left:170px;top:939.5px"><i>圆</i><i>度</i></div><div class="lt lts" style="left:315px;top:939.5px"><i>坐</i><i>标</i>8</div><div class="lt lts" style="left:444px;top:939.5px"><i>圆</i>9</div>
<div class="a" id="redbox"></div>
<div class="a" id="prop"></div>
<div class="ptitle" style="left:594px;top:246px;width:483px;height:37px"><span style="position:absolute;left:5px;font-size:21px">CNC</span><span style="position:absolute;left:55px;font-weight:bold"><i>属</i><i>性</i></span></div>
<svg style="left:1010px;top:250px" width="70" height="30" viewBox="0 0 70 30"><path d="M9 7h10M11 7v9M17 7v9M7 16h14M14 16v7" stroke="#3A5E98" stroke-width="2" fill="none"/><path d="M41 7l14 14M55 7L41 21" stroke="#3A5E98" stroke-width="2.6"/></svg>
<div class="a" style="left:594px;top:283px;width:36px;height:229px;background:#D5E4F2"></div>
<div class="pcat" style="top:283px;height:38px;line-height:40px"><span style="position:absolute;left:44px;font-size:25px">ID &amp; Coord</span></div>
<div class="pcat" style="top:435px;height:39px;line-height:39px"><span style="position:absolute;left:44px"><i>其</i><i>他</i></span></div>
<svg style="left:598px;top:285px" width="30" height="200" viewBox="0 0 30 200"><rect x="3" y="7" width="18" height="18" rx="3" fill="#FDFDFD" stroke="#8A8A8A" stroke-width="2"/><path d="M7 16h10" stroke="#5A7AB8" stroke-width="2.5"/><rect x="3" y="160" width="18" height="18" rx="3" fill="#FDFDFD" stroke="#8A8A8A" stroke-width="2"/><path d="M7 169h10" stroke="#5A7AB8" stroke-width="2.5"/></svg>
<div class="a" style="left:630px;top:358px;width:450px;height:3px;background:#DCE8F4"></div><div class="a" style="left:630px;top:396px;width:450px;height:3px;background:#DCE8F4"></div><div class="a" style="left:630px;top:433px;width:450px;height:3px;background:#DCE8F4"></div><div class="a" style="left:630px;top:511px;width:450px;height:3px;background:#DCE8F4"></div><div class="a" style="left:834px;top:322px;width:3px;height:113px;background:#E4ECF5"></div><div class="a" style="left:834px;top:474px;width:3px;height:832px;background:#E4ECF5"></div>
<svg style="left:634px;top:325px" width="30" height="30" viewBox="0 0 30 30"><rect x="1.5" y="1.5" width="25" height="25" fill="#E8EEF4" stroke="#C8D0DC" stroke-width="2"/><rect x="6" y="6" width="16" height="16" fill="#F8FAFC" stroke="#A8B4C4" stroke-width="1"/><path d="M8 11l5 8l8-13" stroke="#3A5A98" stroke-width="3" fill="none"/></svg>
<div class="prow" style="left:676px;top:322px;height:36px;line-height:36px"><i>名</i><i>称</i></div><div class="prow" style="left:637px;top:361px;height:36px;line-height:36px"><i>坐</i><i>标</i></div><div class="prow" style="left:845px;top:361px;height:36px;line-height:36px"><i>坐</i><i>标</i>8</div><div class="prow" style="left:637px;top:399px;height:36px;line-height:36px"><i>组</i><i>号</i></div><div class="prow" style="left:845px;top:399px;height:36px;line-height:36px">0</div><div class="prow" style="left:637px;top:475px;height:36px;line-height:36px"><i>锁</i><i>定</i><i>公</i><i>差</i></div><div class="prow" style="left:845px;top:475px;height:36px;line-height:36px"><i>否</i></div>
<div class="ptitle" style="left:0;top:1323px;width:1077px;height:36px;line-height:36px"><span style="position:absolute;left:7px;font-weight:bold"><i>全</i><i>景</i><i>图</i></span></div>
<svg style="left:1010px;top:1326px" width="70" height="30" viewBox="0 0 70 30"><path d="M9 7h10M11 7v9M17 7v9M7 16h14M14 16v7" stroke="#3A5E98" stroke-width="2" fill="none"/><path d="M41 7l14 14M55 7L41 21" stroke="#3A5E98" stroke-width="2.6"/></svg>
<div class="a" id="pano"></div>
<div class="a" style="left:1084px;top:286px;width:3px;height:1374px;background:#E6F0FB"></div><div class="a" style="left:15px;top:1657px;width:3065px;height:3px;background:#A9BDD7;z-index:5"></div>
<div class="a" id="vhead"></div><div class="t" style="left:1093px;top:247px;font-size:26.5px;line-height:34px;color:#15428B"><i>影</i><i>像</i></div>
<svg style="left:0;top:0" width="3080" height="1660" viewBox="0 0 3080 1660" font-family="Liberation Sans, sans-serif"><defs><clipPath id="cam"><rect x="1207" y="368" width="1867" height="1292"/></clipPath>
<radialGradient id="ggray" gradientUnits="userSpaceOnUse" cx="2080" cy="850" r="1500"><stop offset="0" stop-color="#9E9E9E"/><stop offset="0.27" stop-color="#9E9E9E"/><stop offset="0.4" stop-color="#9A9A9A"/><stop offset="0.567" stop-color="#949494"/><stop offset="0.633" stop-color="#909090"/><stop offset="0.667" stop-color="#8D8D8D"/><stop offset="0.8" stop-color="#8A8A8A"/><stop offset="1" stop-color="#868686"/></radialGradient>
<filter id="blur1" x="-5%" y="-5%" width="110%" height="110%"><feGaussianBlur stdDeviation="1.5"/></filter>
</defs><g clip-path="url(#cam)"><rect x="1207" y="368" width="1867" height="1292" fill="#040404"/><g filter="url(#blur1)" fill="url(#ggray)"><path d="M1200 360L1524 360L1526.5 366.0C1527.5 368.2 1531.0 373.7 1532.8 379.0C1534.6 384.3 1536.6 392.2 1537.6 398.0C1538.6 403.8 1540.3 409.8 1539.0 414.0C1537.7 418.2 1534.3 419.2 1529.6 423.4C1524.9 427.6 1518.0 433.9 1510.6 439.2C1503.2 444.5 1494.8 450.0 1485.3 455.0C1475.8 460.0 1464.2 464.1 1453.6 469.4C1443.0 474.7 1432.5 481.0 1421.9 486.8C1411.3 492.6 1399.2 499.2 1390.2 504.2C1381.2 509.2 1374.9 512.7 1368.0 516.9C1361.1 521.1 1353.8 525.4 1349.0 529.6C1344.2 533.8 1342.2 537.2 1339.5 542.2C1336.8 547.2 1335.2 553.1 1333.1 559.7C1331.0 566.3 1328.6 576.1 1326.8 581.9C1325.0 587.7 1323.6 589.2 1322.0 594.5C1320.4 599.8 1319.4 607.2 1317.3 613.6C1315.2 620.0 1313.1 625.7 1309.4 632.6C1305.7 639.5 1300.1 647.9 1295.1 654.8C1290.1 661.7 1285.0 668.5 1279.2 673.8C1273.4 679.1 1265.5 681.8 1260.2 686.5C1254.9 691.2 1250.9 697.5 1247.5 702.3C1244.1 707.0 1241.7 709.7 1239.6 715.0C1237.5 720.3 1235.8 719.8 1234.9 734.0C1234.0 748.2 1234.5 787.5 1234.2 800.0C1233.9 812.5 1233.7 798.8 1233.0 809.0C1232.3 819.2 1231.3 843.5 1230.0 861.0C1228.7 878.5 1227.7 900.8 1225.0 914.0C1222.3 927.2 1218.2 933.7 1214.0 940.0C1209.8 946.3 1202.3 950.0 1200.0 952.0Z"/><path d="M1844.7 359.6L1847.9 373.0L1850.8 386.5L1853.4 400.1L1855.8 413.7L1857.9 427.3L1859.8 441.0L1861.4 454.7L1862.7 468.5L1863.8 482.2L1864.6 496.0L1865.2 509.8L1865.5 523.6L1865.5 537.4L1865.2 551.2L1864.7 565.0L1864.0 578.8L1863.0 592.6L1861.7 606.4L1860.1 620.1L1858.3 633.8L1856.3 647.4L1853.9 661.0L1851.3 674.6L1848.5 688.1C1848.6 690.6 1848.1 697.7 1849.0 703.0C1849.9 708.3 1851.2 713.7 1854.0 720.0C1856.8 726.3 1860.8 733.9 1866.0 741.0C1871.2 748.1 1878.2 755.8 1885.0 762.5C1891.8 769.2 1900.2 775.7 1907.0 781.0C1913.8 786.3 1920.6 790.8 1926.0 794.5C1931.4 798.2 1937.2 801.6 1939.5 803.0L2378 1066C2381.0 1068.0 2388.8 1074.7 2396.0 1078.0C2403.2 1081.3 2412.0 1084.8 2421.0 1086.0C2430.0 1087.2 2439.7 1087.0 2449.8 1085.0C2459.9 1083.0 2472.0 1078.8 2481.5 1073.8C2491.0 1068.8 2499.4 1062.2 2506.8 1054.8C2514.2 1047.4 2520.0 1039.5 2525.8 1029.4C2531.6 1019.4 2535.9 1008.8 2541.7 994.5C2547.5 980.2 2554.9 959.6 2560.7 943.8C2566.5 928.0 2571.8 912.7 2576.5 899.5C2581.2 886.3 2585.3 875.2 2589.2 864.6C2593.1 854.0 2596.0 847.1 2600.0 836.0C2604.0 824.9 2609.0 809.3 2613.0 798.0C2617.0 786.7 2620.7 776.3 2624.0 768.0C2627.3 759.7 2629.5 753.8 2633.0 748.0C2636.5 742.2 2640.5 736.8 2645.0 733.0C2649.5 729.2 2654.8 726.8 2660.0 725.0C2665.2 723.2 2673.3 722.5 2676.0 722.0L2759 725L2761.0 725.2L2757.7 751.5L2753.9 777.7L2749.7 803.8L2745.1 829.9L2740.0 855.9L2734.6 881.8L2728.7 907.6L2722.4 933.3L2715.7 958.9L2708.6 984.4L2701.0 1009.8L2693.1 1035.0L2684.7 1060.1L2675.9 1085.1L2666.8 1110.0L2657.2 1134.6L2647.2 1159.2L2636.9 1183.5L2626.1 1207.7L2614.9 1231.7L2603.4 1255.5L2591.5 1279.2L2579.2 1302.6L2566.5 1325.8L2553.4 1348.9L2540.0 1371.7L2526.2 1394.3L2512.0 1416.6L2497.5 1438.7L2482.6 1460.6L2467.4 1482.3L2451.8 1503.7L2435.9 1524.8L2419.6 1545.7L2403.0 1566.3L2386.1 1586.7L2368.8 1606.7L2351.2 1626.5L2333.3 1646.0L2315.1 1665.2L3080 1668L3080 360Z"/><path d="M1291.0 1668.0C1290.8 1659.0 1290.2 1666.7 1290.0 1613.8C1289.8 1560.9 1289.5 1399.9 1290.0 1350.8C1290.5 1301.7 1290.3 1329.5 1293.0 1319.0C1295.7 1308.5 1301.2 1297.3 1306.0 1287.7C1310.8 1278.1 1315.8 1268.4 1322.0 1261.4C1328.2 1254.4 1334.2 1250.9 1343.0 1245.6C1351.8 1240.3 1361.4 1235.9 1374.6 1229.8C1387.8 1223.7 1408.0 1214.9 1422.0 1208.8C1436.0 1202.7 1446.5 1199.1 1458.7 1193.0C1471.0 1186.9 1483.2 1180.8 1495.5 1172.0C1507.8 1163.2 1520.2 1150.5 1532.4 1140.4C1544.7 1130.3 1556.7 1120.3 1569.0 1111.5C1581.3 1102.7 1594.6 1093.9 1606.0 1087.8C1617.4 1081.7 1626.2 1077.5 1637.6 1074.7C1649.0 1071.9 1662.1 1070.6 1674.4 1071.0C1686.7 1071.4 1699.8 1074.1 1711.2 1077.3C1722.6 1080.5 1734.3 1085.5 1742.8 1090.4C1751.3 1095.3 1758.8 1103.8 1762.0 1106.5L2191.0 1360.0C2193.5 1362.3 2199.3 1368.0 2206.0 1374.0C2212.7 1380.0 2224.2 1387.6 2231.0 1396.0C2237.8 1404.4 2243.3 1414.5 2247.0 1424.5C2250.7 1434.5 2252.8 1443.8 2253.0 1456.0C2253.2 1468.2 2251.7 1484.8 2248.3 1498.0C2244.9 1511.2 2239.6 1522.7 2232.5 1535.0C2225.4 1547.3 2216.5 1559.5 2206.0 1571.8C2195.5 1584.1 2183.4 1595.4 2169.4 1608.6C2155.4 1621.8 2133.2 1640.8 2122.0 1650.7C2110.8 1660.6 2105.3 1665.1 2102.0 1668.0Z"/><circle cx="2395.8" cy="1278.5" r="81"/></g><path d="M2677 366H2764V372Q2720 374 2677 370Z" fill="#080808"/><path d="M1501 1161Q1492 1185 1490 1220" stroke="#2A2A2A" stroke-width="2.5" fill="none"/><path d="M2333 978q6 8 3 18q4 14-6 24q-14 8-24 2q10-12 24-14" stroke="#383838" stroke-width="2.2" fill="none"/><circle cx="1619" cy="1280" r="4" fill="#4A4A4A"/><circle cx="2240" cy="396" r="2" fill="#808080"/><circle cx="2917" cy="531" r="2.5" fill="#707070"/><circle cx="2298" cy="606" r="1.6" fill="#848484"/><circle cx="2437" cy="814" r="1.6" fill="#848484"/><circle cx="2723" cy="442" r="1.5" fill="#868686"/><circle cx="2970" cy="440" r="1.6" fill="#808080"/><circle cx="1140" cy="532" r="723" fill="none" stroke="#FF1010" stroke-width="2.2"/><circle cx="1140" cy="532" r="1632" fill="none" stroke="#FF1010" stroke-width="2.2"/><path d="M1207.3 654.8L1874 1660" stroke="#149414" stroke-width="2.6" stroke-dasharray="7 7"/><path d="M1971.7 734.0L2427.4 1004.6L2347.8 1138.7L1892.1 868.1Z" stroke="#18D818" stroke-width="2.2" fill="none" stroke-dasharray="36 17"/><path d="M1815.3 1012.1L2248.2 1269.2L2133.9 1461.8L1700.9 1204.7Z" stroke="#18D818" stroke-width="2.2" fill="none" stroke-dasharray="36 17"/><path d="M2347.8 1138.7 L2248.2 1269.2" stroke="#18D818" stroke-width="2.2" fill="none" stroke-dasharray="36 17"/><path d="M1936.0 803.0 L2380.0 1068.0" stroke="#F0F020" stroke-width="8" stroke-dasharray="3.5 6"/><path d="M1936.0 803.0 L2380.0 1068.0" stroke="#E8E820" stroke-width="2.5"/><path d="M1766.0 1110.0 L2188.0 1359.0" stroke="#F0F020" stroke-width="8" stroke-dasharray="3.5 6"/><path d="M1766.0 1110.0 L2188.0 1359.0" stroke="#E8E820" stroke-width="2.5"/><path d="M2030 768L1987 836L1808 1130" stroke="#18E018" stroke-width="2.4" fill="none"/><path d="M1989.0 833.0 L1983.6 857.7 L1969.9 849.6 Z" fill="#18E018"/><path d="M1807.0 1131.0 L1812.4 1106.3 L1826.1 1114.4 Z" fill="#18E018"/><path d="M2158 939L2118 1004M2148 942L2165 937" stroke="#E01010" stroke-width="2.4" fill="none"/><path d="M2035 1140L1980 1231" stroke="#E01010" stroke-width="2.4" fill="none"/><path d="M1972 1218L1980 1232L1994 1224" stroke="#E01010" stroke-width="2.4" fill="none"/><circle cx="2395.8" cy="1278" r="81" fill="none" stroke="#F0F020" stroke-width="8" stroke-dasharray="3.5 6"/><circle cx="2395.8" cy="1278" r="81" fill="none" stroke="#E8E820" stroke-width="2.2"/><circle cx="2395.8" cy="1278" r="135" fill="none" stroke="#18C818" stroke-width="2.2" stroke-dasharray="42 18"/><circle cx="2395.8" cy="1278" r="26" fill="none" stroke="#18C818" stroke-width="2.2" stroke-dasharray="24 12"/><path d="M2390 1288L2217 1411" stroke="#101010" stroke-width="1.6"/><rect x="2386" y="1291" width="78" height="47" fill="#FFFFFF" stroke="#202020" stroke-width="2"/><text x="2425" y="1327.95" font-size="39" fill="#1C1CFF" text-anchor="middle" textLength="60" lengthAdjust="spacingAndGlyphs">圆9</text><path d="M2262 1172L2395 1277L2452 1322" stroke="#18E018" stroke-width="2.4" fill="none"/><path d="M2335.0 1230.0 L2356.6 1238.1 L2348.0 1249.1 Z" fill="#18E018"/><path d="M2442.0 1314.0 L2464.2 1321.3 L2454.3 1333.9 Z" fill="#18E018"/><path d="M2395.8 1173L2395.8 1194" stroke="#E81010" stroke-width="2.4"/><path d="M2386.8 1182.0L2395.8 1194L2404.8 1182.0" stroke="#E81010" stroke-width="2.4" fill="none"/><path d="M2395.8 1418L2395.8 1362" stroke="#E81010" stroke-width="2.4"/><path d="M2404.8 1374.0L2395.8 1362L2386.8 1374.0" stroke="#E81010" stroke-width="2.4" fill="none"/><path d="M2260 1278L2318 1278" stroke="#E81010" stroke-width="2.4"/><path d="M2306.0 1287.0L2318 1278L2306.0 1269.0" stroke="#E81010" stroke-width="2.4" fill="none"/><path d="M2534 1278L2476 1278" stroke="#E81010" stroke-width="2.4"/><path d="M2488.0 1269.0L2476 1278L2488.0 1287.0" stroke="#E81010" stroke-width="2.4" fill="none"/><rect x="1920.8" y="792.1" width="17" height="17" fill="#00FF00" stroke="#1030E0" stroke-width="2.2"/><rect x="2377.9" y="1063.7" width="17" height="17" fill="#00FF00" stroke="#1030E0" stroke-width="2.2"/><rect x="1751.7" y="1098.8" width="17" height="17" fill="#00FF00" stroke="#1030E0" stroke-width="2.2"/><rect x="2184.5" y="1353.9" width="17" height="17" fill="#00FF00" stroke="#1030E0" stroke-width="2.2"/><rect x="2387.1" y="1188.5" width="17" height="17" fill="#00FF00" stroke="#1030E0" stroke-width="2.2"/><rect x="2307.2" y="1283.5" width="17" height="17" fill="#00FF00" stroke="#1030E0" stroke-width="2.2"/><rect x="2450.2" y="1324.0" width="17" height="17" fill="#00FF00" stroke="#1030E0" stroke-width="2.2"/><rect x="2386.5" y="1268" width="18" height="18" fill="none" stroke="#1030E0" stroke-width="2.2"/><path d="M2389 1270l13 13m0-13l-13 13" stroke="#18C818" stroke-width="1.6"/><rect x="2485.5" y="1364" width="18" height="18" fill="none" stroke="#1010D0" stroke-width="2.2"/><rect x="1978" y="1364" width="171" height="47" fill="#A0A0A0" fill-opacity=".55" stroke="#303030" stroke-width="2"/><path d="M2020 1364V1411" stroke="#303030" stroke-width="2"/><circle cx="2002" cy="1390" r="11" fill="none" stroke="#1C1CFF" stroke-width="2"/><text x="2022" y="1402" font-size="39" fill="#1C1CFF" textLength="117" lengthAdjust="spacingAndGlyphs">0.1000</text><text x="1989" y="1454" font-size="39" fill="#1C1CFF" textLength="217" lengthAdjust="spacingAndGlyphs">圆度: 0.0240</text><rect x="2017" y="781" width="238" height="46" fill="#FFFFFF" stroke="#202020" stroke-width="2"/><text x="2136" y="817.455" font-size="39" fill="#1C1CFF" text-anchor="middle" textLength="217" lengthAdjust="spacingAndGlyphs">距离: 1.6999</text><rect x="2149" y="945" width="98" height="47" fill="#FFFFFF" stroke="#202020" stroke-width="2"/><text x="2198" y="981.955" font-size="39" fill="#1C1CFF" text-anchor="middle" textLength="82" lengthAdjust="spacingAndGlyphs">线10</text><rect x="2176" y="1125" width="310" height="45" fill="#FFFFFF" stroke="#202020" stroke-width="2"/><text x="2331" y="1160.95" font-size="39" fill="#1C1CFF" text-anchor="middle" textLength="295" lengthAdjust="spacingAndGlyphs">直径标注: 0.7830</text><rect x="1967" y="1244" width="98" height="46" fill="#FFFFFF" stroke="#202020" stroke-width="2"/><text x="2016" y="1280.45" font-size="39" fill="#1C1CFF" text-anchor="middle" textLength="80" lengthAdjust="spacingAndGlyphs">线11</text><path d="M1207 1115.7H3074" stroke="#EE1CEA" stroke-width="3" stroke-dasharray="20 11 6.4 11" stroke-dashoffset="27.1"/><path d="M2141.2 368V1660" stroke="#EE1CEA" stroke-width="3" stroke-dasharray="20 11 6.4 11" stroke-dashoffset="4.5"/><text x="1225" y="405" font-size="30" fill="#069006" stroke="#069006" stroke-width="0.5" textLength="512" lengthAdjust="spacingAndGlyphs">X=-331.9088 Y=-510.5893 <tspan fill="#A00808" stroke="#A00808">Z=-231.8358</tspan></text><text x="1227" y="447" font-size="30" fill="#069006" stroke="#069006" stroke-width="0.5" textLength="257" lengthAdjust="spacingAndGlyphs">实际放大 = 25.4538</text></g><g fill="#DCEBFC"><path d="M1161 522L1175 547H1147Z"/><rect x="1141" y="557" width="42" height="10" rx="5"/><rect x="1141" y="579" width="42" height="10" rx="5"/><rect x="1141" y="601" width="42" height="10" rx="5"/><rect x="1141" y="616" width="42" height="10" rx="5"/><rect x="2136" y="299" width="12" height="7" rx="3.5"/><rect x="2126" y="312" width="32" height="7" rx="3.5"/><rect x="2115" y="325" width="54" height="7" rx="3.5"/><rect x="2102" y="338" width="80" height="7" rx="3.5"/><circle cx="1141" cy="1116" r="4.5"/><rect x="1148" y="1100" width="7" height="32" rx="3.5"/><rect x="1160" y="1090" width="7" height="52" rx="3.5"/><rect x="1172" y="1081" width="7" height="70" rx="3.5"/><rect x="1183" y="1074" width="7" height="84" rx="3.5"/><rect x="1141" y="1606" width="42" height="9" rx="4.5"/><rect x="1141" y="1628" width="42" height="9" rx="4.5"/><rect x="1141" y="1648" width="42" height="9" rx="4.5"/></g></svg>
<svg style="left:0;top:0" width="1080" height="1660" viewBox="0 0 1080 1660"><defs><clipPath id="pc"><rect x="179" y="1366" width="718" height="294"/></clipPath><filter id="blur2"><feGaussianBlur stdDeviation="1.0"/></filter></defs><g clip-path="url(#pc)"><defs><linearGradient id="gt1" x1="0" y1="0" x2="1" y2="1"><stop offset="0" stop-color="#9E9E9E"/><stop offset="1" stop-color="#8A8A8A"/></linearGradient><linearGradient id="gt2" x1="0" y1="0" x2="1" y2="1"><stop offset="0" stop-color="#A2A2A2"/><stop offset="1" stop-color="#969696"/></linearGradient></defs><rect x="179" y="1366" width="718" height="294" fill="#9A9A9A"/><rect x="179" y="1366" width="169" height="140" fill="url(#gt1)"/><rect x="348" y="1366" width="273" height="140" fill="url(#gt1)"/><rect x="621" y="1366" width="276" height="140" fill="url(#gt1)"/><rect x="179" y="1506" width="169" height="154" fill="url(#gt2)"/><rect x="348" y="1506" width="273" height="154" fill="url(#gt2)"/><rect x="621" y="1506" width="276" height="154" fill="url(#gt2)"/><rect x="179" y="1366" width="718" height="4" fill="#3A3A3A"/><g filter="url(#blur2)"><path d="M433.8 1420.8C437.3 1419.1 445.1 1413.5 455.0 1410.5C465.0 1407.4 480.6 1404.1 493.4 1402.5C506.2 1400.9 518.5 1400.5 531.7 1400.7C545.0 1400.9 560.3 1401.8 573.0 1403.7C585.8 1405.6 598.5 1408.9 608.4 1412.0C618.4 1415.1 628.8 1420.6 632.9 1422.3C632.4 1423.8 631.3 1428.8 629.7 1431.1C628.1 1433.4 625.8 1435.3 623.2 1436.1C620.6 1437.0 615.8 1436.1 614.3 1436.1C610.4 1435.5 597.6 1433.0 590.7 1432.0C583.9 1431.0 577.7 1430.2 573.0 1430.2C568.4 1430.2 565.2 1430.6 562.7 1432.0C560.3 1433.4 559.1 1434.5 558.3 1438.5C557.5 1442.5 557.8 1453.3 557.7 1456.2L556.8 1527.0C557.8 1528.2 559.0 1531.4 562.7 1534.4C566.4 1537.3 573.3 1541.0 578.9 1544.7C584.6 1548.4 590.7 1552.8 596.6 1556.5C602.5 1560.2 608.4 1566.1 614.3 1566.8C620.2 1567.6 623.2 1565.1 632.0 1560.9C640.9 1556.8 655.6 1548.4 667.4 1541.8C679.3 1535.1 696.6 1526.0 702.9 1521.1C709.1 1516.2 707.2 1517.7 705.2 1512.3C703.2 1506.9 696.4 1496.3 691.1 1488.7C685.7 1481.0 676.5 1471.2 673.4 1466.5C670.2 1461.9 670.9 1463.1 671.9 1460.6C672.9 1458.2 678.0 1453.3 679.3 1451.8C682.7 1454.5 693.0 1461.9 699.9 1468.0C706.8 1474.2 714.2 1480.8 720.6 1488.7C726.9 1496.5 732.8 1505.9 738.3 1515.2C743.7 1524.6 748.6 1534.4 753.0 1544.7C757.4 1555.0 761.6 1567.8 764.8 1577.2C768.0 1586.5 770.3 1593.9 772.2 1600.8C774.1 1607.7 775.4 1615.5 776.0 1618.5C774.6 1618.8 771.1 1620.2 767.8 1620.2C764.4 1620.2 759.4 1622.7 756.0 1618.5C752.5 1614.2 750.1 1602.2 747.1 1594.9C744.2 1587.5 741.7 1578.6 738.3 1574.2C734.8 1569.8 735.3 1565.9 726.5 1568.3C717.6 1570.8 698.4 1582.1 685.2 1589.0C671.9 1595.9 654.4 1605.2 646.8 1609.6C639.2 1614.1 640.9 1610.6 639.4 1615.5C637.9 1620.4 637.8 1631.3 637.9 1639.1C638.1 1647.0 639.9 1658.8 640.3 1662.7L558.3 1662.7C559.8 1659.3 561.7 1648.0 567.1 1642.1C572.5 1636.2 586.8 1629.8 590.7 1627.3C590.0 1625.4 588.8 1619.5 586.3 1615.5C583.9 1611.6 577.7 1605.7 576.0 1603.7C572.1 1605.9 559.8 1615.3 552.4 1617.0C545.0 1618.7 538.1 1614.1 531.7 1614.1C525.3 1614.1 521.9 1619.0 514.0 1617.0C506.2 1615.0 489.4 1604.7 484.5 1602.2L469.8 1625.9C474.2 1628.6 490.4 1635.9 496.3 1642.1C502.2 1648.2 503.7 1659.3 505.2 1662.7L422.6 1662.7C422.5 1657.3 422.5 1638.6 422.0 1630.3C421.5 1621.9 426.9 1619.7 419.6 1612.6C412.3 1605.4 392.1 1595.8 378.3 1587.5C364.6 1579.2 345.4 1566.5 337.0 1563.0C328.7 1559.6 330.7 1564.0 328.2 1566.8C325.6 1569.7 324.1 1574.5 321.7 1580.1C319.2 1585.8 316.3 1594.9 313.4 1600.8C310.6 1606.7 307.5 1612.8 304.6 1615.5C301.6 1618.3 298.8 1617.1 295.7 1617.3C292.7 1617.4 287.8 1616.6 286.3 1616.4C286.9 1612.8 287.7 1603.4 289.8 1594.9C291.9 1586.4 294.7 1576.2 298.7 1565.4C302.6 1554.6 307.5 1541.3 313.4 1530.0C319.3 1518.7 326.7 1507.3 334.1 1497.5C341.4 1487.7 348.8 1479.3 357.7 1471.0C366.5 1462.6 382.3 1451.3 387.2 1447.4C388.4 1449.6 396.0 1454.7 394.5 1460.6C393.1 1466.5 383.7 1475.4 378.3 1482.8C372.9 1490.1 364.6 1500.0 362.1 1504.9C359.6 1509.8 356.4 1506.9 363.6 1512.3C370.7 1517.7 390.9 1528.7 404.9 1537.3C418.9 1545.9 439.3 1559.7 447.7 1563.9C456.0 1568.1 450.8 1564.4 455.0 1562.4C459.2 1560.5 464.4 1556.5 472.7 1552.1C481.1 1547.7 499.3 1540.5 505.2 1535.9C511.1 1531.2 507.7 1532.9 508.1 1524.1C508.5 1515.2 507.6 1489.6 507.5 1482.8L507.5 1438.5C506.7 1437.3 506.1 1432.6 502.2 1431.1C498.4 1429.7 491.4 1429.3 484.5 1429.7C477.6 1430.0 467.8 1432.2 460.9 1433.2C454.0 1434.2 447.8 1437.6 443.2 1435.6C438.7 1433.5 435.4 1423.3 433.8 1420.8Z" fill="#060606"/><circle cx="533.2" cy="1427.3" r="12" fill="#9A9A9A"/><circle cx="341.4" cy="1532.9" r="12" fill="#9A9A9A"/><circle cx="723.5" cy="1537.3" r="12" fill="#9A9A9A"/></g><rect x="541" y="1620" width="280" height="60" fill="none" stroke="#E8902A" stroke-width="2.2"/></g></svg>
<div class="a" id="dd"></div>
<svg style="left:0;top:0" width="3080" height="480" viewBox="0 0 3080 480"><rect x="2276" y="210" width="64" height="62" rx="3" fill="#FFE2AE" stroke="#F0A850" stroke-width="2"/><rect x="2282" y="215" width="22" height="22" fill="#FFFDF5" stroke="#303030" stroke-width="2.5"/><rect x="2312" y="215" width="22" height="22" fill="#FFFFFF" stroke="#28A0E0" stroke-width="2.5"/><rect x="2282" y="245" width="22" height="22" fill="#FFFFFF" stroke="#28A0E0" stroke-width="2.5"/><rect x="2312" y="245" width="22" height="22" fill="#FFFFFF" stroke="#28A0E0" stroke-width="2.5"/><rect x="2269" y="292" width="222" height="85" rx="3" fill="url(#gsel2)" stroke="#E8B860" stroke-width="1.5"/><rect x="2270" y="294" width="220" height="82" fill="none" stroke="#E81828" stroke-width="3" stroke-dasharray="9 5"/><rect x="2270" y="294" width="220" height="82" fill="none" stroke="#404878" stroke-width="1" stroke-dasharray="5 5"/><rect x="2266" y="290" width="8" height="8" fill="#FFFFFF" stroke="#707070" stroke-width="1.2"/><rect x="2376" y="290" width="8" height="8" fill="#FFFFFF" stroke="#707070" stroke-width="1.2"/><rect x="2486" y="290" width="8" height="8" fill="#FFFFFF" stroke="#707070" stroke-width="1.2"/><rect x="2266" y="331" width="8" height="8" fill="#FFFFFF" stroke="#707070" stroke-width="1.2"/><rect x="2486" y="331" width="8" height="8" fill="#FFFFFF" stroke="#707070" stroke-width="1.2"/><rect x="2266" y="372" width="8" height="8" fill="#FFFFFF" stroke="#707070" stroke-width="1.2"/><rect x="2376" y="372" width="8" height="8" fill="#FFFFFF" stroke="#707070" stroke-width="1.2"/><rect x="2486" y="372" width="8" height="8" fill="#FFFFFF" stroke="#707070" stroke-width="1.2"/><circle cx="2307" cy="330" r="25" fill="none" stroke="#38C0D0" stroke-width="2" stroke-dasharray="10 29.3" stroke-dashoffset="-15"/><rect x="2300" y="299" width="14" height="14" fill="#FFFFFF" stroke="#303030" stroke-width="2"/><rect x="2276" y="323" width="13" height="13" fill="#FFFFFF" stroke="#28A0E0" stroke-width="2"/><rect x="2324" y="323" width="13" height="13" fill="#FFFFFF" stroke="#28A0E0" stroke-width="2"/><rect x="2300" y="348" width="13" height="13" fill="#FFFFFF" stroke="#28A0E0" stroke-width="2"/><path d="M2281 402L2302 391V434L2281 445Z" fill="#FDFDFD" stroke="#505050" stroke-width="2.2"/><path d="M2334 402L2314 391V434L2334 445Z" fill="#FDFDFD" stroke="#30A0E0" stroke-width="2.2"/><path d="M2308 388V446" stroke="#189060" stroke-width="2"/></svg>
<div class="ddt" style="top:223px"><i>矩</i><i>形</i><i>阵</i><i>列</i></div><div class="ddt" style="top:311px"><i>环</i><i>形</i><i>阵</i><i>列</i></div><div class="ddt" style="top:400px"><i>镜</i><i>像</i></div>

</body></html>
